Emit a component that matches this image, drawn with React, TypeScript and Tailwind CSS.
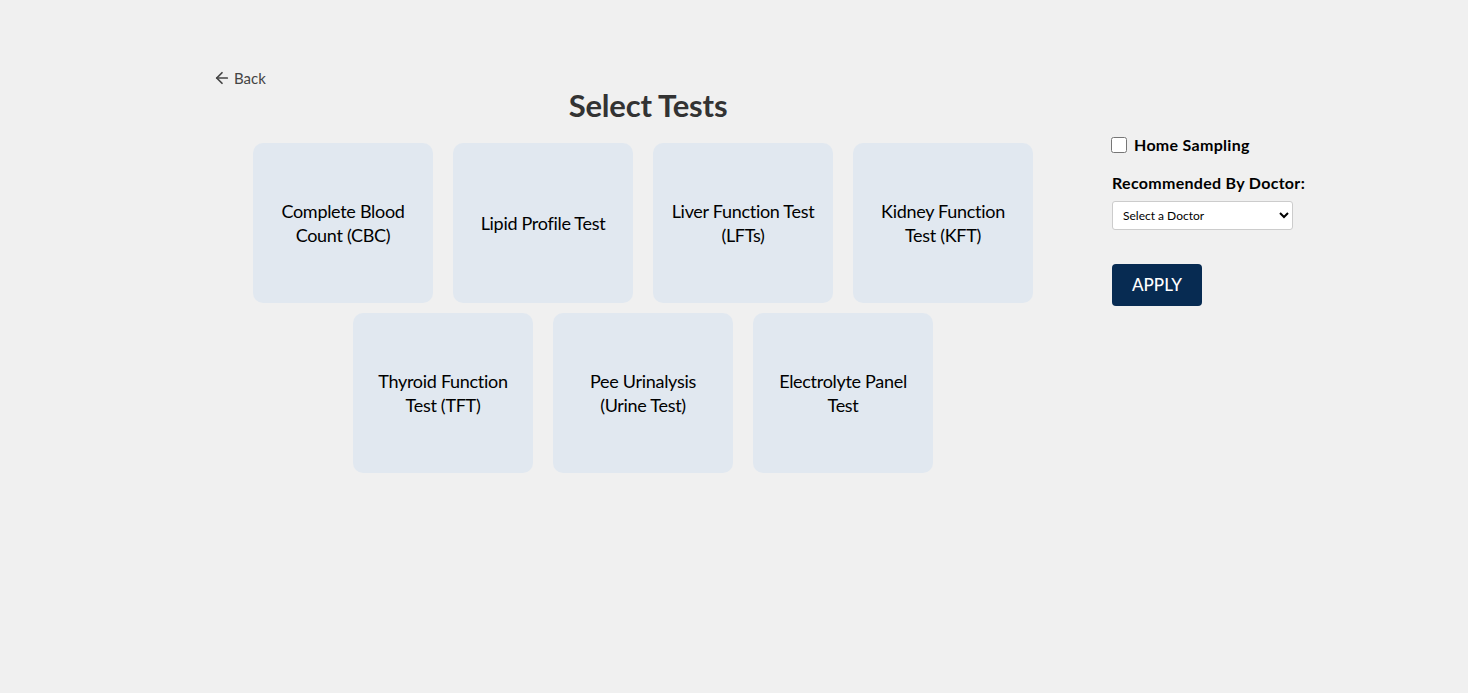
import { ArrowLeft } from 'lucide-react'

const tests = [
  ['Complete Blood', 'Count (CBC)'],
  ['Lipid Profile Test'],
  ['Liver Function Test', '(LFTs)'],
  ['Kidney Function', 'Test (KFT)'],
  ['Thyroid Function', 'Test (TFT)'],
  ['Pee Urinalysis', '(Urine Test)'],
  ['Electrolyte Panel', 'Test'],
]

export default function App() {
  return (
    <div className="min-h-screen bg-[#f0f0f0] font-['Lato',sans-serif] text-black">
      <div className="flex pl-[213px] pt-[68px]">
        <section className="w-[860px]">
          <a href="#" className="flex items-center gap-[3px] text-[15px] text-[#444] h-[20px]">
            <ArrowLeft size={18} strokeWidth={2.3} />
            <span>Back</span>
          </a>
          <h1 className="text-center text-[31px] font-bold text-[#333] leading-[36px] -mt-[1px] pl-[10px] tracking-[-0.2px]">
            Select Tests
          </h1>
          <div className="mx-auto mt-[15px] flex w-[800px] flex-wrap justify-center">
            {tests.map((t) => (
              <button
                key={t.join(' ')}
                className="mx-[10px] my-[5px] flex h-[160px] w-[180px] flex-col items-center justify-center rounded-[10px] bg-[#e1e8f0] text-[18px] leading-[24px] tracking-[-0.3px]"
              >
                {t.map((line) => (
                  <span key={line}>{line}</span>
                ))}
              </button>
            ))}
          </div>
        </section>

        <aside className="ml-[38px] pt-[65px] w-[220px]">
          <label className="flex items-center gap-[7px] text-[16px] font-bold tracking-[0.3px]">
            <input type="checkbox" className="h-[16px] w-[16px] accent-[#072b52]" />
            Home Sampling
          </label>
          <div className="mt-[14px] ml-px text-[16px] font-bold tracking-[0.3px] whitespace-nowrap">Recommended By Doctor:</div>
          <select className="mt-[6px] ml-px h-[29px] w-[181px] rounded-[3px] border border-[#ccc] bg-white px-[6px] text-[12px] font-['Lato',sans-serif]">
            <option>Select a Doctor</option>
          </select>
          <div className="mt-[34px] ml-px">
            <button className="h-[42px] w-[90px] rounded-[4px] bg-[#072b52] text-[17px] font-medium text-white">
              APPLY
            </button>
          </div>
        </aside>
      </div>
    </div>
  )
}
